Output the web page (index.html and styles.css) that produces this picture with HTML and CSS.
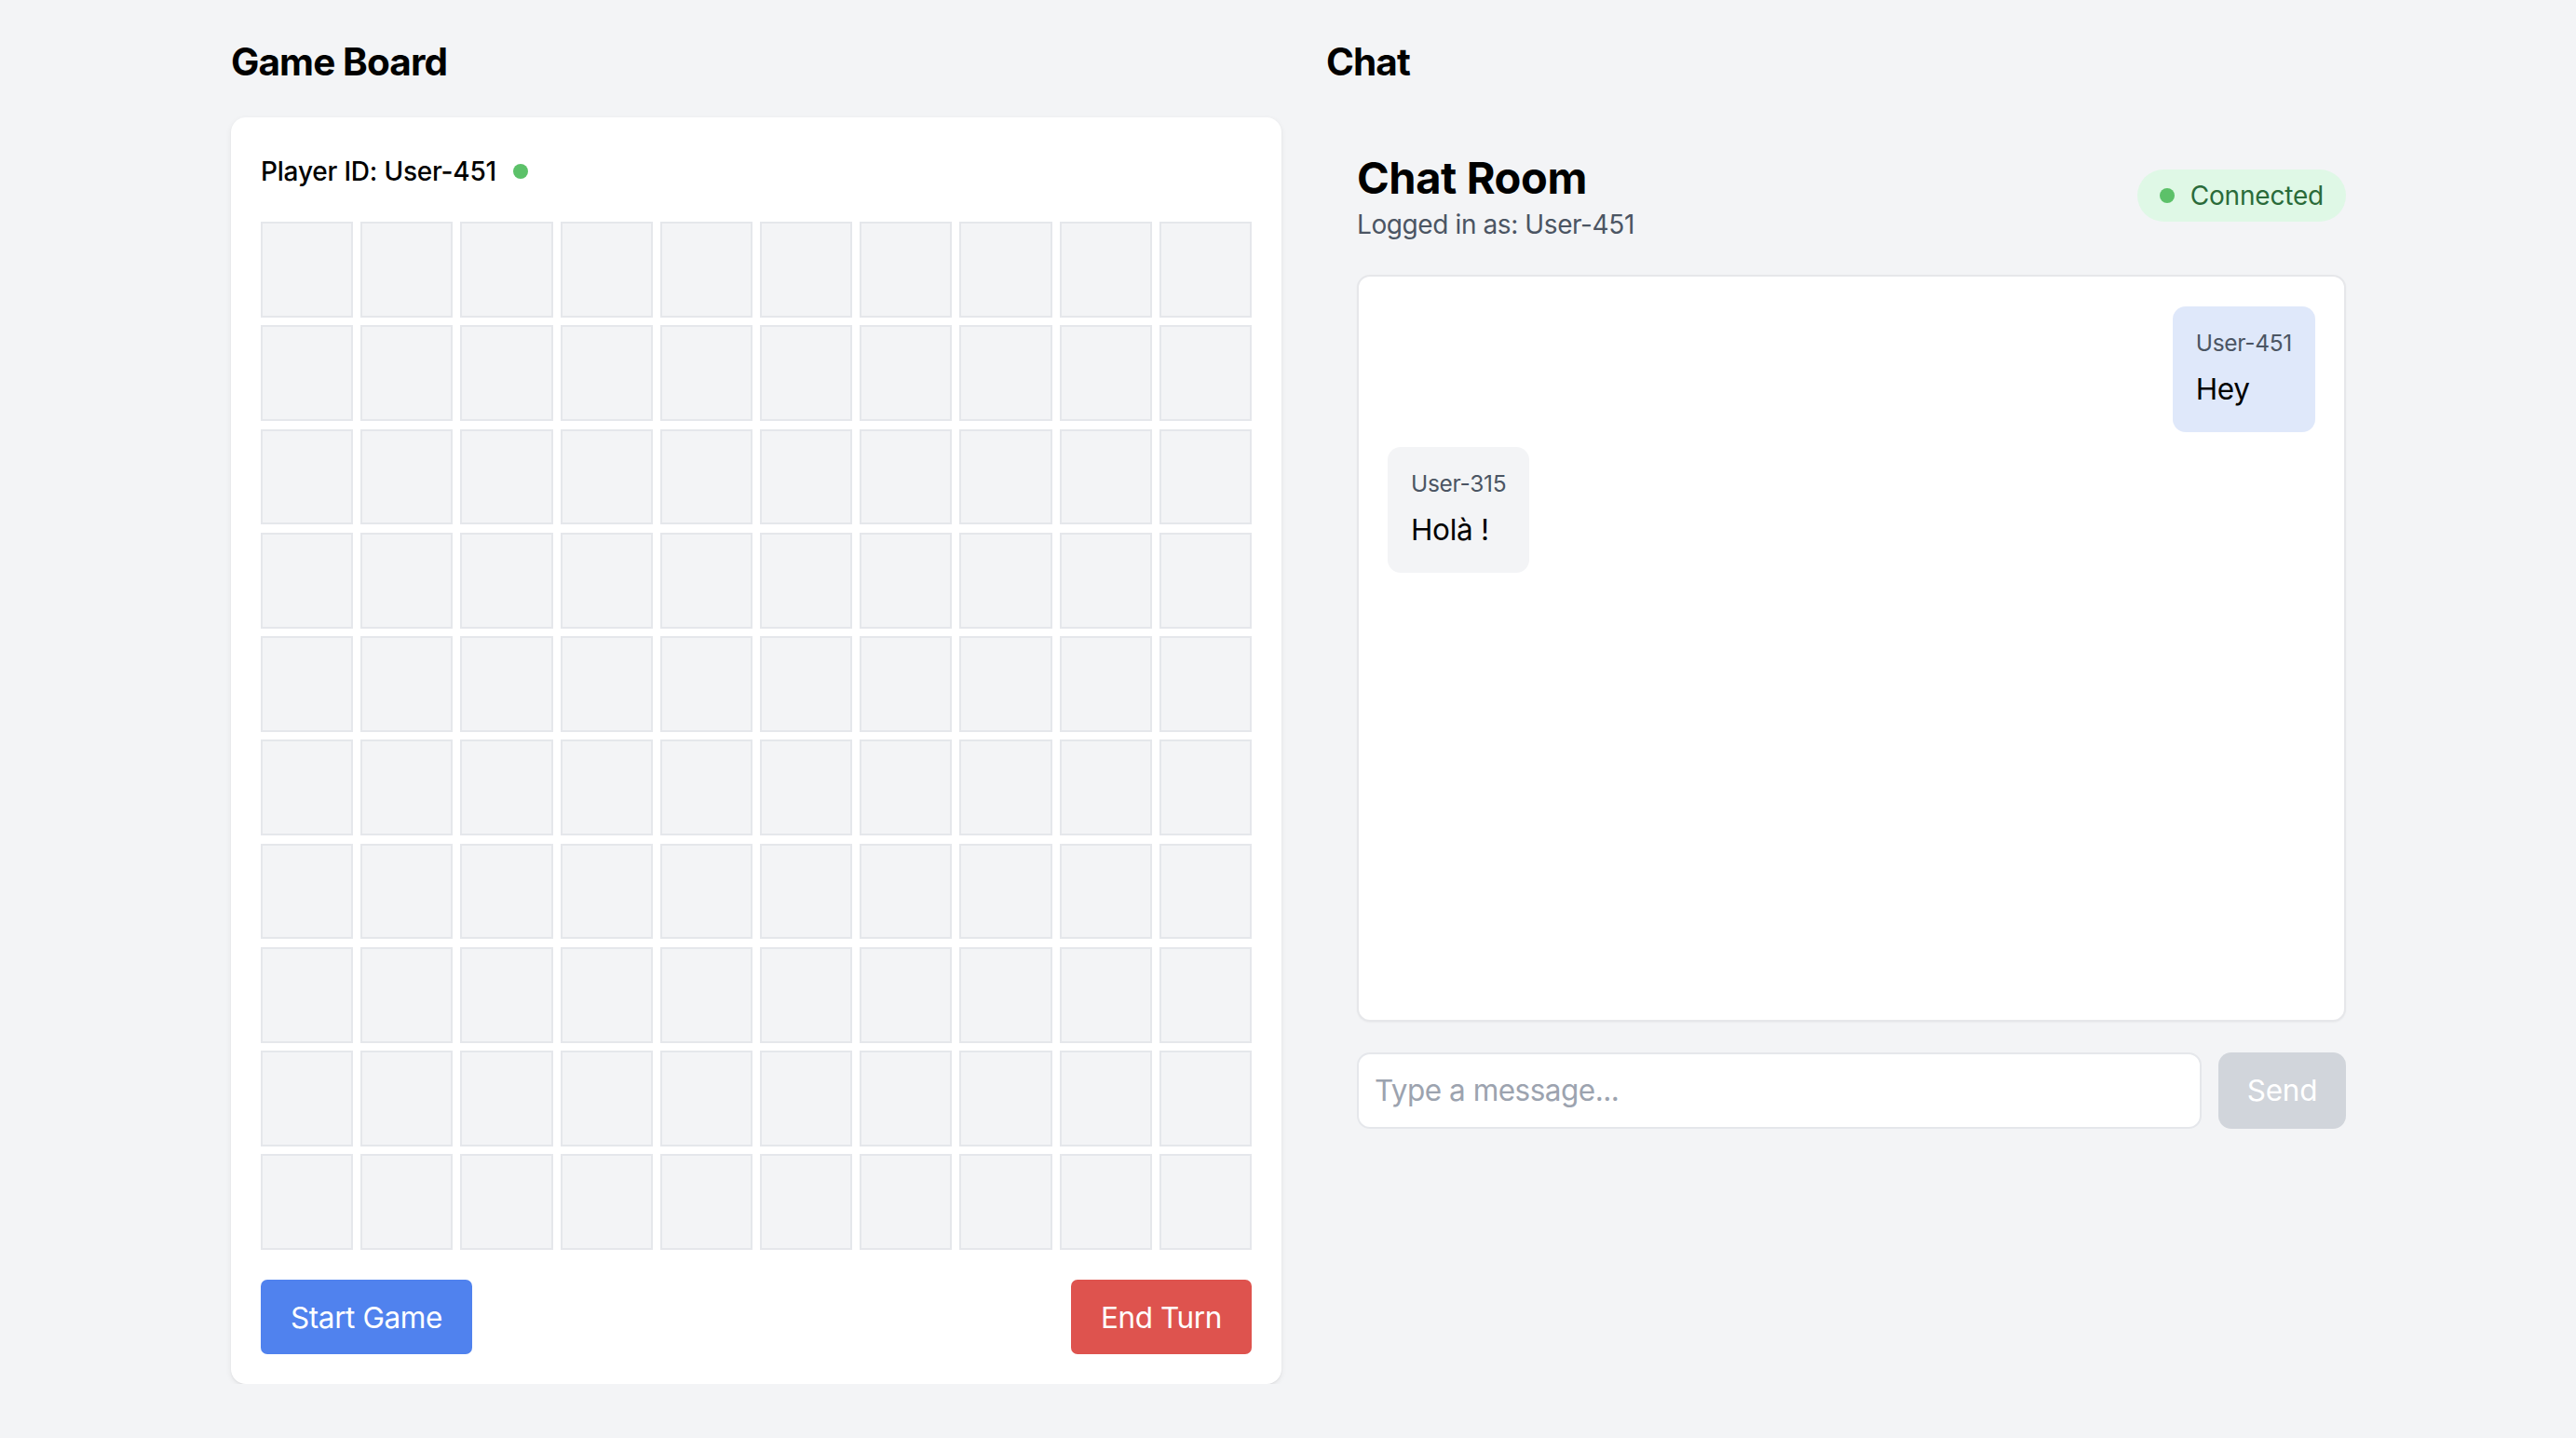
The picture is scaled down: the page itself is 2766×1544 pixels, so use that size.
FILE: index.html
```html
<!DOCTYPE html>
<html lang="en">
<head>
<meta charset="utf-8">
<title>Game Board &amp; Chat</title>
<link rel="stylesheet" href="styles.css">
</head>
<body>
<div class="layout">
  <section class="col">
    <h2 class="col-title">Game Board</h2>
    <div class="card">
      <div class="player">Player ID: User-451 <span class="dot"></span></div>
      <div class="board">
        <div class="cell"></div><div class="cell"></div><div class="cell"></div><div class="cell"></div><div class="cell"></div><div class="cell"></div><div class="cell"></div><div class="cell"></div><div class="cell"></div><div class="cell"></div>
        <div class="cell"></div><div class="cell"></div><div class="cell"></div><div class="cell"></div><div class="cell"></div><div class="cell"></div><div class="cell"></div><div class="cell"></div><div class="cell"></div><div class="cell"></div>
        <div class="cell"></div><div class="cell"></div><div class="cell"></div><div class="cell"></div><div class="cell"></div><div class="cell"></div><div class="cell"></div><div class="cell"></div><div class="cell"></div><div class="cell"></div>
        <div class="cell"></div><div class="cell"></div><div class="cell"></div><div class="cell"></div><div class="cell"></div><div class="cell"></div><div class="cell"></div><div class="cell"></div><div class="cell"></div><div class="cell"></div>
        <div class="cell"></div><div class="cell"></div><div class="cell"></div><div class="cell"></div><div class="cell"></div><div class="cell"></div><div class="cell"></div><div class="cell"></div><div class="cell"></div><div class="cell"></div>
        <div class="cell"></div><div class="cell"></div><div class="cell"></div><div class="cell"></div><div class="cell"></div><div class="cell"></div><div class="cell"></div><div class="cell"></div><div class="cell"></div><div class="cell"></div>
        <div class="cell"></div><div class="cell"></div><div class="cell"></div><div class="cell"></div><div class="cell"></div><div class="cell"></div><div class="cell"></div><div class="cell"></div><div class="cell"></div><div class="cell"></div>
        <div class="cell"></div><div class="cell"></div><div class="cell"></div><div class="cell"></div><div class="cell"></div><div class="cell"></div><div class="cell"></div><div class="cell"></div><div class="cell"></div><div class="cell"></div>
        <div class="cell"></div><div class="cell"></div><div class="cell"></div><div class="cell"></div><div class="cell"></div><div class="cell"></div><div class="cell"></div><div class="cell"></div><div class="cell"></div><div class="cell"></div>
        <div class="cell"></div><div class="cell"></div><div class="cell"></div><div class="cell"></div><div class="cell"></div><div class="cell"></div><div class="cell"></div><div class="cell"></div><div class="cell"></div><div class="cell"></div>
      </div>
      <div class="actions">
        <button class="btn btn-start" type="button">Start Game</button>
        <button class="btn btn-end" type="button">End Turn</button>
      </div>
    </div>
  </section>
  <section class="col">
    <h2 class="col-title">Chat</h2>
    <div class="chat">
      <div class="chat-head">
        <div class="chat-info">
          <h1 class="chat-title">Chat Room</h1>
          <p class="chat-user">Logged in as: User-451</p>
        </div>
        <div class="pill"><span class="dot"></span>Connected</div>
      </div>
      <div class="messages">
        <div class="msg own">
          <div class="msg-from">User-451</div>
          <div class="msg-text">Hey</div>
        </div>
        <div class="msg">
          <div class="msg-from">User-315</div>
          <div class="msg-text">Holà !</div>
        </div>
      </div>
      <form class="composer">
        <input class="composer-input" type="text" placeholder="Type a message...">
        <button class="composer-send" type="button">Send</button>
      </form>
    </div>
  </section>
</div>
</body>
</html>
```

FILE: styles.css
```css
* {
  box-sizing: border-box;
}

html, body {
  margin: 0;
  padding: 0;
  background: #f3f4f6;
}

body {
  font-family: Inter, "Noto Sans", "Liberation Sans", sans-serif;
  color: #000;
}

.layout {
  display: grid;
  grid-template-columns: 1128px 1128px;
  column-gap: 48px;
  padding-top: 39px;
  margin-left: 248px;
}

.col-title {
  margin: 0 0 31px 0;
  font-size: 40.5px;
  line-height: 56px;
  font-weight: 700;
  letter-spacing: -0.9px;
}

.card {
  background: #fff;
  border-radius: 16px;
  padding: 32px;
  box-shadow: 0 2px 6px rgba(0, 0, 0, 0.07), 0 1px 2px rgba(0, 0, 0, 0.05);
}

.player {
  display: flex;
  align-items: center;
  gap: 18px;
  height: 52px;
  font-size: 28px;
  font-weight: 500;
  letter-spacing: -0.2px;
  margin-bottom: 28px;
}

.dot {
  display: inline-block;
  width: 16px;
  height: 16px;
  border-radius: 50%;
  background: #5cc169;
  flex: none;
}

.board {
  display: grid;
  grid-template-columns: repeat(10, 1fr);
  grid-auto-rows: 102.75px;
  column-gap: 8px;
  row-gap: 8.5px;
}

.cell {
  background: #f3f4f6;
  border: 2px solid #e5e7eb;
}

.actions {
  display: flex;
  justify-content: space-between;
  margin-top: 32px;
}

.btn {
  height: 80px;
  padding: 0 32px;
  border: none;
  border-radius: 7px;
  color: #fff;
  font-family: inherit;
  font-size: 31.5px;
  font-weight: 400;
  letter-spacing: -0.4px;
}

.btn-start {
  background: #5082ee;
}

.btn-end {
  background: #de534e;
}

.chat {
  padding: 36px 33px 33px 33px;
}

.chat-head {
  display: flex;
  justify-content: space-between;
  align-items: center;
}

.chat-title {
  margin: 0;
  font-size: 47px;
  line-height: 58px;
  font-weight: 700;
  letter-spacing: -0.4px;
}

.chat-user {
  margin: 0;
  font-size: 28px;
  line-height: 42px;
  color: #4b5563;
  letter-spacing: -0.4px;
}

.pill {
  display: flex;
  align-items: center;
  gap: 17px;
  height: 56px;
  padding: 0 24px;
  margin-top: -4px;
  border-radius: 28px;
  background: #dff8e6;
  color: #2a6b3a;
  font-size: 28px;
  font-weight: 400;
  letter-spacing: -0.2px;
}

.messages {
  margin-top: 32.5px;
  height: 802px;
  background: #fff;
  border: 2px solid #e6e7ea;
  border-radius: 14px;
  padding: 32px 31px 31px 31px;
  display: flex;
  flex-direction: column;
  align-items: flex-start;
  gap: 16px;
  box-shadow: 0 1px 2px rgba(0, 0, 0, 0.04);
}

.msg {
  background: #f3f4f6;
  border-radius: 14px;
  padding: 22px 25px;
}

.msg.own {
  align-self: flex-end;
  background: #dfe8fa;
}

.msg-from {
  font-size: 24.5px;
  line-height: 35px;
  color: #4b5563;
  letter-spacing: -0.3px;
}

.msg-text {
  margin-top: 7px;
  font-size: 31.5px;
  line-height: 49px;
  color: #000;
  letter-spacing: -0.3px;
}

.composer {
  display: flex;
  gap: 18px;
  margin: 33px 0 0 0;
  height: 82px;
}

.composer-input {
  flex: 1;
  height: 82px;
  border: 2px solid #e5e7eb;
  border-radius: 14px;
  padding: 0 17px;
  font-family: inherit;
  font-size: 31.5px;
  letter-spacing: -0.5px;
  background: #fff;
  color: #111;
  outline: none;
}

.composer-input::placeholder {
  color: #9ca3af;
}

.composer-send {
  width: 137px;
  height: 82px;
  border: none;
  border-radius: 14px;
  background: #d1d5db;
  color: #fff;
  font-family: inherit;
  font-size: 31.5px;
  letter-spacing: -0.3px;
}
```
